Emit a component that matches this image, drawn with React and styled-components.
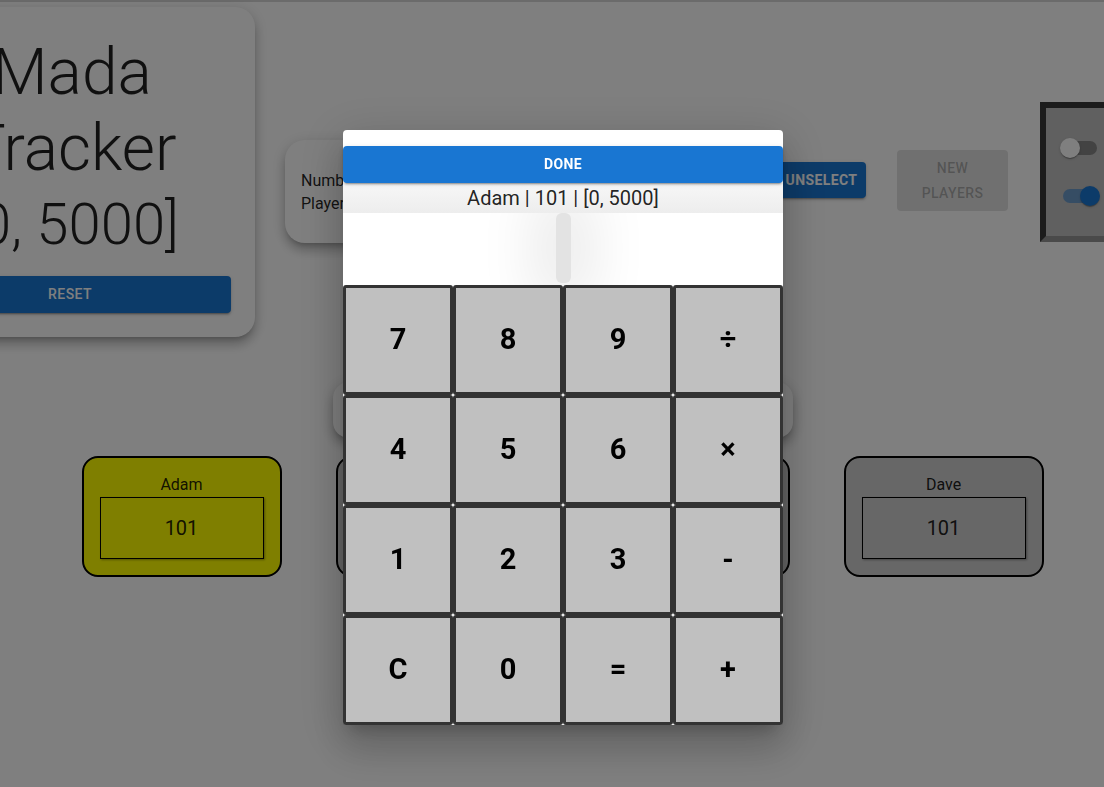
import React from "react";
import styled, { createGlobalStyle } from "styled-components";

const GlobalStyle = createGlobalStyle`
  html, body {
    margin: 0;
    padding: 0;
    height: 100%;
    overflow: hidden;
    background: #ffffff;
    font-family: Roboto, "Liberation Sans", Arial, sans-serif;
    color: rgba(0, 0, 0, 0.87);
  }
  * { box-sizing: border-box; }
`;

const Page = styled.div`
  width: 100%;
  height: 100%;
  overflow: hidden;
`;

const TopStrip = styled.div`
  height: 2px;
  background: #d6d6d6;
`;

const TopRow = styled.div`
  display: flex;
  justify-content: center;
  align-items: flex-start;
  width: 100%;
`;

const Paper = styled.div`
  background: #ffffff;
  border-radius: ${(p) => p.$radius || 20}px;
  box-shadow: 0px 5px 5px -3px rgba(0, 0, 0, 0.2),
    0px 8px 10px 1px rgba(0, 0, 0, 0.14), 0px 3px 14px 2px rgba(0, 0, 0, 0.12);
`;

const TitleCard = styled(Paper)`
  flex: 0 0 370px;
  width: 370px;
  height: 330px;
  margin-top: 5px;
  padding: 24px 24px 23px;
  display: flex;
  flex-direction: column;
`;

const Title = styled.h2`
  margin: 4px 0 0;
  padding-left: 4px;
  font-size: 64px;
  font-weight: 300;
  line-height: 76px;
  text-align: center;
  white-space: nowrap;
  color: rgba(0, 0, 0, 0.87);
`;

const TitleRange = styled.span`
  display: block;
  font-size: 58px;
  line-height: 75px;
`;

const ContainedButton = styled.button`
  border: none;
  border-radius: 4px;
  background: #1976d2;
  color: #ffffff;
  font-family: Roboto, "Liberation Sans", Arial, sans-serif;
  font-size: 14px;
  font-weight: 500;
  letter-spacing: 0.4px;
  text-transform: uppercase;
  line-height: 24.5px;
  padding: 6px 16px;
  box-shadow: 0px 3px 1px -2px rgba(0, 0, 0, 0.2),
    0px 2px 2px 0px rgba(0, 0, 0, 0.14), 0px 1px 5px 0px rgba(0, 0, 0, 0.12);
  cursor: pointer;
`;

const ResetButton = styled(ContainedButton)`
  margin-top: 14px;
  width: 100%;
  height: 37px;
`;

const PlayersCard = styled(Paper)`
  flex: 0 0 462px;
  width: 462px;
  height: 103px;
  margin-top: 138px;
  margin-left: 30px;
  padding: 16px;
  display: flex;
  align-items: center;
  gap: 16px;
`;

const FieldLabel = styled.div`
  width: 80px;
  font-size: 16px;
  line-height: 23px;
`;

const CountSelect = styled.div`
  flex: 1;
  height: 56px;
  border: 1px solid rgba(0, 0, 0, 0.23);
  border-radius: 4px;
  display: flex;
  align-items: center;
  padding: 0 14px;
  font-size: 16px;
`;

const UnselectButton = styled(ContainedButton)`
  flex: 0 0 89px;
  width: 89px;
  height: 36px;
  margin-top: 160px;
  margin-left: 30px;
  padding: 6px 8px;
  font-weight: 700;
`;

const NewPlayersButton = styled(ContainedButton)`
  flex: 0 0 111px;
  width: 111px;
  height: 61px;
  margin-top: 148px;
  margin-left: 31px;
  background: rgba(0, 0, 0, 0.12);
  color: rgba(0, 0, 0, 0.26);
  box-shadow: none;
  cursor: default;
`;

const TogglePanel = styled.div`
  flex: 0 0 179px;
  width: 179px;
  height: 140px;
  margin-top: 100px;
  margin-left: 32px;
  border: 6px solid;
  border-color: #383838 #949494 #949494 #383838;
  background: #c0c0c0;
  padding: 21px 5px;
  display: flex;
  flex-direction: column;
  gap: 10px;
`;

const SwitchRoot = styled.span`
  position: relative;
  display: inline-flex;
  width: 58px;
  height: 38px;
  padding: 12px;
  flex-shrink: 0;
`;

const SwitchTrack = styled.span`
  width: 34px;
  height: 14px;
  border-radius: 7px;
  background: ${(p) => (p.$on ? "#1976d2" : "#000000")};
  opacity: ${(p) => (p.$on ? 0.5 : 0.3)};
`;

const SwitchThumb = styled.span`
  position: absolute;
  top: 9px;
  left: ${(p) => (p.$on ? 29 : 9)}px;
  width: 20px;
  height: 20px;
  border-radius: 50%;
  background: ${(p) => (p.$on ? "#1976d2" : "#ffffff")};
  box-shadow: 0px 2px 1px -1px rgba(0, 0, 0, 0.2),
    0px 1px 1px 0px rgba(0, 0, 0, 0.14), 0px 1px 3px 0px rgba(0, 0, 0, 0.12);
`;

const Switch = ({ on }) => (
  <SwitchRoot>
    <SwitchTrack $on={on} />
    <SwitchThumb $on={on} />
  </SwitchRoot>
);

const Lower = styled.div`
  margin-top: 45px;
  padding-left: 21px;
  display: flex;
  flex-direction: column;
  align-items: center;
`;

const ControlsCard = styled(Paper)`
  width: 460px;
  height: 56px;
`;

const PlayerRow = styled.div`
  margin-top: 18px;
  display: flex;
  gap: 54px;
`;

const PlayerCard = styled.div`
  width: 200px;
  height: 121px;
  border: 2px solid #000000;
  border-radius: 16px;
  background: ${(p) => p.$bg};
  padding: 15px 16px 16px;
  display: flex;
  flex-direction: column;
`;

const PlayerName = styled.div`
  font-size: 16px;
  line-height: 24px;
  text-align: center;
  color: rgba(0, 0, 0, 0.87);
`;

const ScoreInput = styled.input`
  margin: 0;
  width: 100%;
  height: 62px;
  border: 1px solid #000000;
  background: transparent;
  text-align: center;
  font-family: Roboto, "Liberation Sans", Arial, sans-serif;
  font-size: 20px;
  color: rgba(0, 0, 0, 0.87);
  box-shadow: 1px 1px 2px rgba(0, 0, 0, 0.35);
  outline: none;
`;

const Backdrop = styled.div`
  position: fixed;
  inset: 0;
  background: rgba(0, 0, 0, 0.5);
  display: flex;
  justify-content: center;
  align-items: flex-start;
  padding: 130px 0 0 22px;
`;

const Dialog = styled.div`
  width: 440px;
  background: #ffffff;
  border-radius: 4px;
  padding-top: 16px;
  display: flex;
  flex-direction: column;
  box-shadow: 0px 11px 15px -7px rgba(0, 0, 0, 0.2),
    0px 24px 38px 3px rgba(0, 0, 0, 0.14), 0px 9px 46px 8px rgba(0, 0, 0, 0.12);
`;

const DoneButton = styled(ContainedButton)`
  position: relative;
  z-index: 1;
  width: 100%;
  height: 37px;
  font-weight: 700;
`;

const Display = styled.div`
  height: 30px;
  display: flex;
  align-items: center;
  justify-content: center;
  font-size: 20px;
  color: rgba(0, 0, 0, 0.87);
  background: linear-gradient(#f7f7f7, #ededed);
`;

const ScrollArea = styled.div`
  height: 72px;
  display: flex;
  justify-content: center;
  overflow: hidden;
  background: #ffffff;
`;

const ScrollThumb = styled.div`
  width: 15px;
  height: 70px;
  border-radius: 6px;
  background: #e3e3e3;
  box-shadow: 0 0 55px 24px rgba(0, 0, 0, 0.08);
`;

const Keypad = styled.div`
  display: grid;
  grid-template-columns: repeat(4, 110px);
  grid-auto-rows: 110px;
`;

const Key = styled.button`
  border: 3px solid #333333;
  border-radius: 3px;
  background: #c0c0c0;
  color: #000000;
  font-family: Roboto, "Liberation Sans", Arial, sans-serif;
  font-size: 29px;
  font-weight: 700;
  padding: 0 0 3px;
  cursor: pointer;
`;

const keys = ["7", "8", "9", "÷", "4", "5", "6", "×", "1", "2", "3", "-", "C", "0", "=", "+"];

const players = [
  { name: "Adam", score: 101, bg: "#ffff00" },
  { name: "Bob", score: 101, bg: "#cecece" },
  { name: "Carl", score: 101, bg: "#cecece" },
  { name: "Dave", score: 101, bg: "#cecece" },
];

export default function App() {
  return (
    <Page>
      <GlobalStyle />
      <TopStrip />
      <TopRow>
        <TitleCard>
          <Title>
            Mada
            <br />
            Tracker
            <TitleRange>[0, 5000]</TitleRange>
          </Title>
          <ResetButton>Reset</ResetButton>
        </TitleCard>
        <PlayersCard>
          <FieldLabel>Number of Players</FieldLabel>
          <CountSelect>4</CountSelect>
        </PlayersCard>
        <UnselectButton>Unselect</UnselectButton>
        <NewPlayersButton disabled>New Players</NewPlayersButton>
        <TogglePanel>
          <Switch on={false} />
          <Switch on={true} />
        </TogglePanel>
      </TopRow>
      <Lower>
        <ControlsCard $radius={16} />
        <PlayerRow>
          {players.map((p) => (
            <PlayerCard key={p.name} $bg={p.bg}>
              <PlayerName>{p.name}</PlayerName>
              <ScoreInput readOnly value={p.score} />
            </PlayerCard>
          ))}
        </PlayerRow>
      </Lower>
      <Backdrop>
        <Dialog>
          <DoneButton>Done</DoneButton>
          <Display>Adam | 101 | [0, 5000]</Display>
          <ScrollArea>
            <ScrollThumb />
          </ScrollArea>
          <Keypad>
            {keys.map((k) => (
              <Key key={k}>{k}</Key>
            ))}
          </Keypad>
        </Dialog>
      </Backdrop>
    </Page>
  );
}
